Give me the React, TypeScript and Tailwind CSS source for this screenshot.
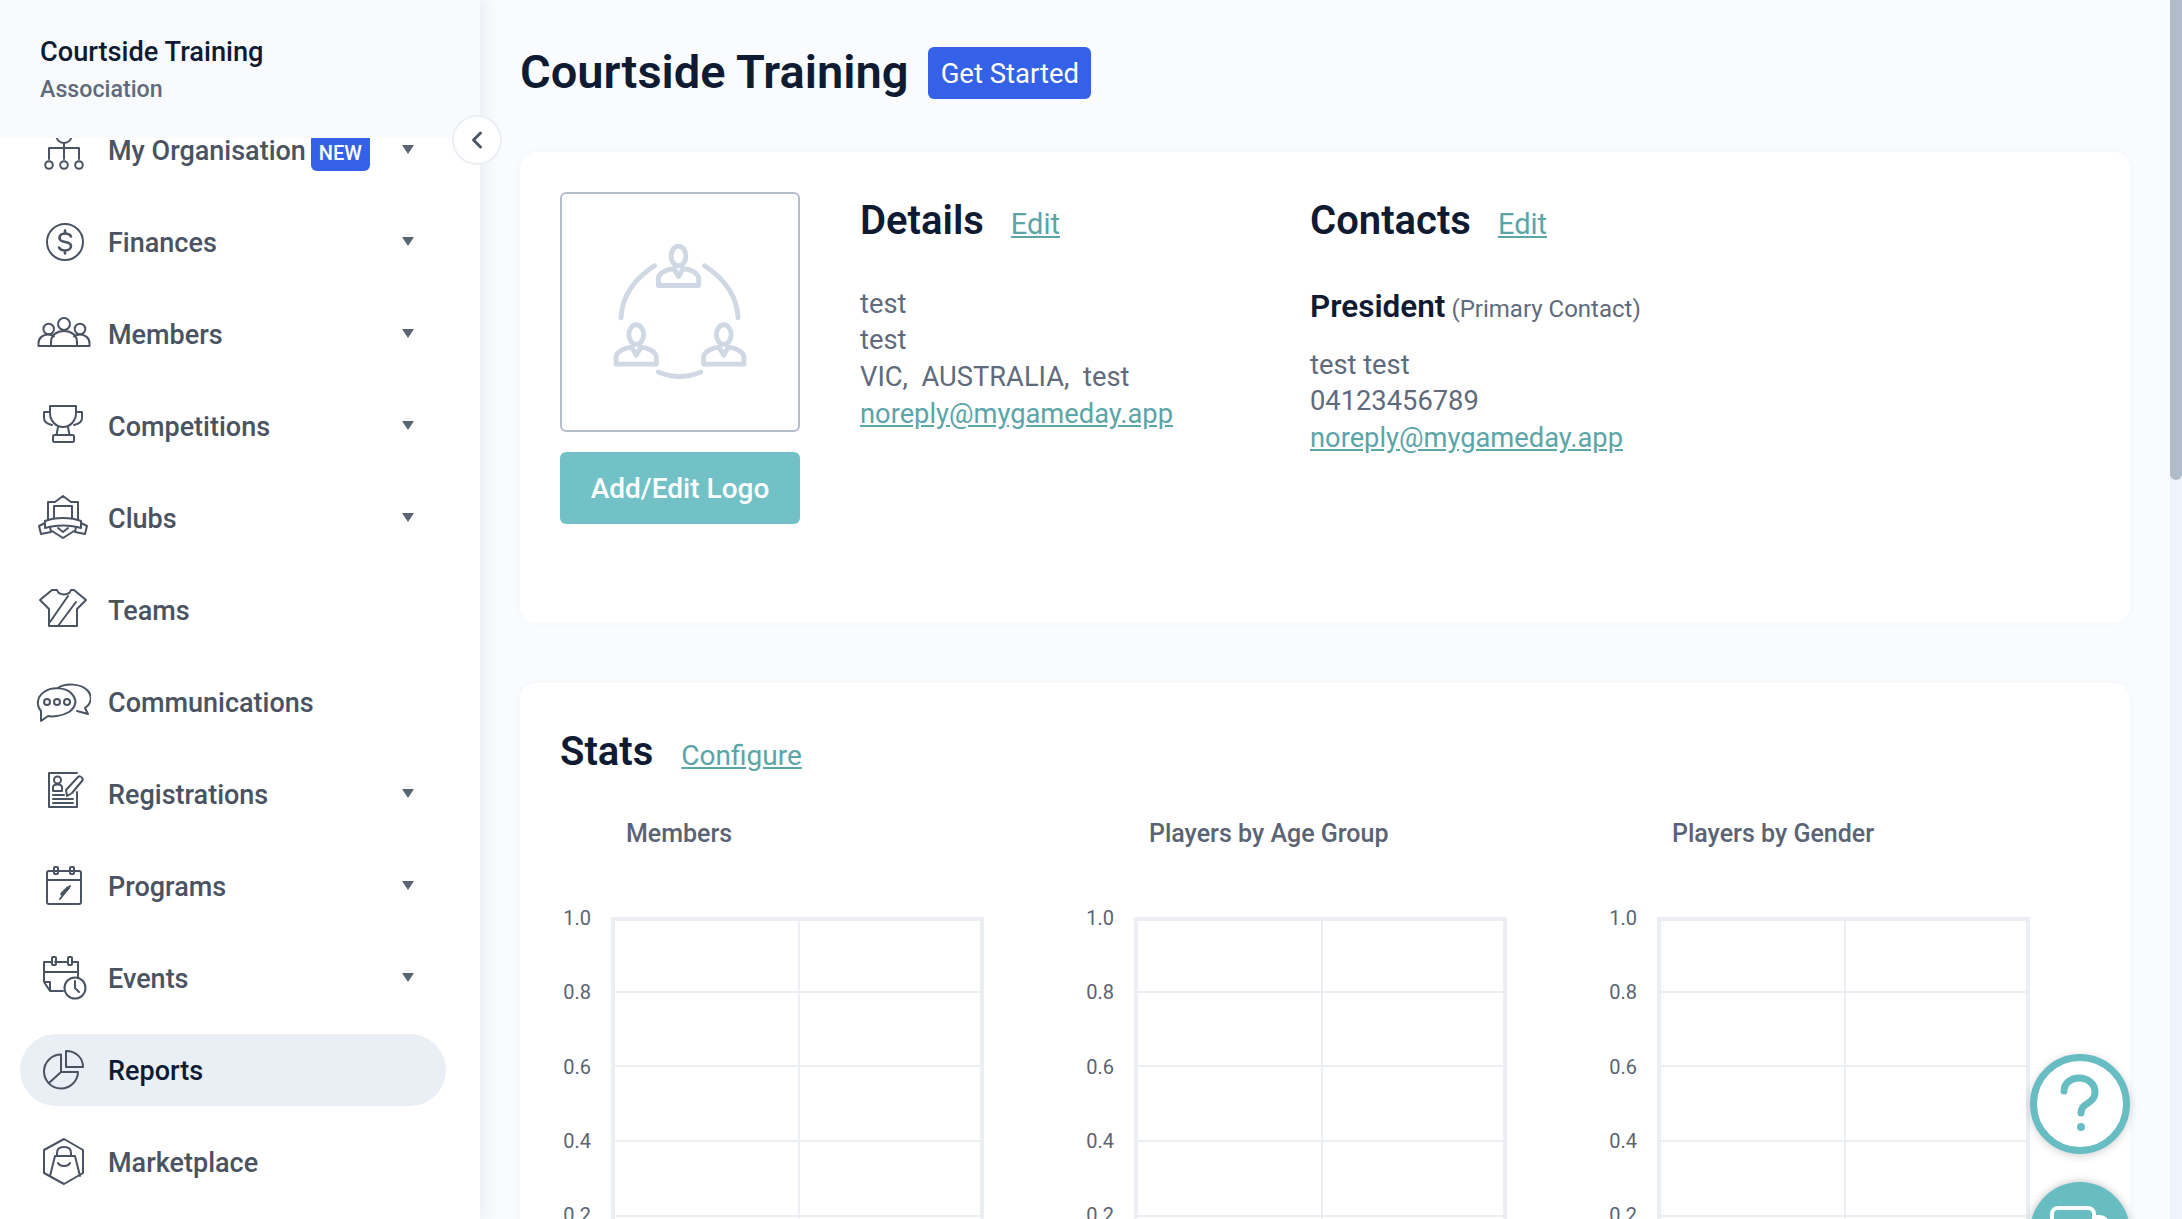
import type { ReactNode } from 'react';
import { ChevronLeft } from 'lucide-react';

const IconSvg = ({ children }: { children: ReactNode }) => (
  <svg width="56" height="56" viewBox="0 0 56 56" fill="none" stroke="#4a5362" strokeWidth="2" strokeLinejoin="round" strokeLinecap="round" className="shrink-0">
    {children}
  </svg>
);

const OrgIcon = () => (
  <IconSvg>
    <circle cx="29" cy="13" r="8" />
    <path d="M14 37V26H44V37M29 21V37" />
    <circle cx="14" cy="43" r="3.8" />
    <circle cx="29" cy="43" r="3.8" />
    <circle cx="44" cy="43" r="3.8" />
  </IconSvg>
);

const FinanceIcon = () => (
  <IconSvg>
    <circle cx="30" cy="28" r="18" />
    <path d="M36 22.5C35 20.5 33 19.5 30 19.5C26.5 19.5 24.5 21.5 24.5 24C24.5 30 36 26 36 32C36 34.8 33.5 36.5 30 36.5C27 36.5 25 35.5 24 33.5M30 16.5V19.5M30 36.5V39.5" strokeWidth="2.6" />
  </IconSvg>
);

const MembersIcon = () => (
  <IconSvg>
    <circle cx="13.7" cy="23" r="5.3" />
    <circle cx="29" cy="18" r="6" />
    <circle cx="45" cy="23" r="5.3" />
    <path d="M3.5 40H54.5M3.5 40V37C3.5 32 8 28.5 13 28.5C15.5 28.5 17.5 29.3 19 30.5M54.5 40V37C54.5 32 50 28.5 45 28.5C42.5 28.5 40.5 29.3 39 30.5M16 40V36C16 29 22 25 29 25C36 25 42 29 42 36V40" />
  </IconSvg>
);

const TrophyIcon = () => (
  <IconSvg>
    <path d="M15 8H41V15C41 23 35 29 28 29C21 29 15 23 15 15Z" />
    <path d="M15 14H9V20C9 24 12 26 17 27M41 14H47V20C47 24 44 26 39 27M23 29L21.5 37M33 29L34.5 37" />
    <rect x="18" y="37" width="21" height="7" rx="1.5" />
  </IconSvg>
);

const ClubIcon = () => (
  <IconSvg>
    <path d="M13 30V12H20L28 6L36 12H43V30" />
    <path d="M19 28V16H37V28" />
    <path d="M10 31C20 27 36 27 46 31L46 38C36 34.5 20 34.5 10 38Z" />
    <path d="M10 33L4 36L6 44L16 42L15 37M46 33L52 36L50 44L40 42L41 37" />
    <path d="M17 41L28 48L39 41M23 38L28 42L33 38" />
  </IconSvg>
);

const ShirtIcon = () => (
  <IconSvg>
    <path d="M17 8L5 18L14 27V44H42V27L51 18L39 8H36C34 14 24 14 22 8Z" />
    <path d="M33 14L15 40M41 20L23 44" />
  </IconSvg>
);

const ChatIcon = () => (
  <IconSvg>
    <path d="M6 37C1 31 2 23 9 18C16 13 30 13 36 19C43 26 41 33 34 38C27 42 18 43 13 42L6 47Z" />
    <circle cx="12" cy="28" r="3" />
    <circle cx="22" cy="28" r="3" />
    <circle cx="32" cy="28" r="3" />
    <path d="M23 14C30 9 46 9 53 17C58 23 56 30 50 34L53 40L42 37" />
  </IconSvg>
);

const RegoIcon = () => (
  <IconSvg>
    <path d="M42 7H14V41H42V26" />
    <circle cx="22.5" cy="14" r="3.5" />
    <path d="M18 25V21.5C18 19.5 20 18.5 22.5 18.5C25 18.5 27 19.5 27 21.5V25Z" />
    <path d="M32 30L31 24L43 11C44 10 46 10 47 12C48 13 48 14 47 15L37 27Z" />
    <path d="M18 29H29M18 33H38M18 37H38" />
  </IconSvg>
);

const ProgramIcon = () => (
  <IconSvg>
    <rect x="12" y="13" width="34" height="33" rx="2" />
    <rect x="19" y="9" width="4" height="7" rx="1" />
    <rect x="35" y="9" width="4" height="7" rx="1" />
    <path d="M12 22H46M25 41L35 28" />
    <path d="M27 36L33 30" strokeWidth="3.5" />
  </IconSvg>
);

const EventIcon = () => (
  <IconSvg>
    <path d="M17 12H9V32L15 41H28M9 32H15V41M20 12H32M37 12H43V27M9 22H43" />
    <rect x="17" y="7" width="4" height="8" rx="1" />
    <rect x="33" y="7" width="4" height="8" rx="1" />
    <circle cx="40" cy="38" r="10.5" />
    <path d="M40 31V38L44 42" />
  </IconSvg>
);

const PieIcon = () => (
  <IconSvg>
    <path d="M31 9V25H48C48 16 41 9 31 9Z" />
    <path d="M26 12.5A17 17 0 1 0 43 30H26ZM26 30L14 41" />
  </IconSvg>
);

const MarketIcon = () => (
  <IconSvg>
    <path d="M29 5L48 16V39L29 50L9 39V16Z" />
    <path d="M15 42L20 22H40L45 42" />
    <path d="M22 22V19C22 15 25 13 29 13C33 13 36 15 36 19V22M23 29C25 33 33 33 35 29" />
  </IconSvg>
);

const navItems = [
  { label: 'My Organisation', icon: <OrgIcon />, caret: true, badge: true },
  { label: 'Finances', icon: <FinanceIcon />, caret: true },
  { label: 'Members', icon: <MembersIcon />, caret: true },
  { label: 'Competitions', icon: <TrophyIcon />, caret: true },
  { label: 'Clubs', icon: <ClubIcon />, caret: true },
  { label: 'Teams', icon: <ShirtIcon /> },
  { label: 'Communications', icon: <ChatIcon /> },
  { label: 'Registrations', icon: <RegoIcon />, caret: true },
  { label: 'Programs', icon: <ProgramIcon />, caret: true },
  { label: 'Events', icon: <EventIcon />, caret: true },
  { label: 'Reports', icon: <PieIcon />, active: true },
  { label: 'Marketplace', icon: <MarketIcon /> },
];

const Caret = () => (
  <svg width="12" height="9" viewBox="0 0 12 9" className="ml-auto mb-[1px] shrink-0">
    <path d="M0 0H12L6 9Z" fill="#5a6474" />
  </svg>
);

const Person = ({ x, y }: { x: number; y: number }) => (
  <g transform={`translate(${x} ${y})`}>
    <ellipse cx="20.5" cy="-13" rx="7.5" ry="10" />
    <path d="M0 17V10C0 4 10 0 16 0L20.5 8L25 0C31 0 41 4 41 10V17Z" />
  </g>
);

const LogoPlaceholder = () => (
  <svg width="238" height="238" viewBox="0 0 240 240" fill="none" stroke="#cfd8e3" strokeWidth="5" strokeLinecap="round" strokeLinejoin="round">
    <Person x={98} y={76} />
    <Person x={55} y={156} />
    <Person x={144} y={156} />
    <path d="M94 73C74 86 61 104 60 126M145 73C165 86 178 104 179 126M98 181C112 187 127 187 141 181" />
  </svg>
);

const Chart = ({ title }: { title: string }) => (
  <div className="w-[523px] shrink-0">
    <div className="ml-[66px] text-[25px] leading-[36px] font-medium text-[#5a6474]">{title}</div>
    <div className="mt-[65px] flex gap-[20px]">
      <div className="-mt-[11px] w-[31px] text-right text-[20px] leading-[24px] text-[#5a6474]">
        {['1.0', '0.8', '0.6', '0.4', '0.2'].map((tick) => (
          <div key={tick} className="h-[74.3px]">{tick}</div>
        ))}
      </div>
      <svg width="373" height="373" viewBox="0 0 373 373" fill="none" stroke="#ebeff4" strokeWidth="2" className="shrink-0">
        <rect x="2" y="2" width="369" height="369" strokeWidth="4" />
        <path d="M188 0V373M0 75H373M0 149H373M0 224H373M0 299H373" />
      </svg>
    </div>
  </div>
);

export default function App() {
  return (
    <div className="relative flex h-screen w-full overflow-hidden bg-[#f9fbfe] font-['Roboto',sans-serif] text-[#4a5362]">
      {/* Sidebar */}
      <aside className="relative z-10 flex w-[480px] shrink-0 flex-col bg-white shadow-[5px_0_14px_rgba(110,125,150,0.10)]">
        <div className="relative z-10 h-[138px] shrink-0 bg-[#f8fafd] pl-[40px] pt-[34px]">
          <div className="text-[27.2px] leading-[36px] font-medium text-[#0f1a33]">Courtside Training</div>
          <div className="mt-[1px] text-[23.2px] leading-[36px] font-medium text-[#5f6b7c]">Association</div>
        </div>
        <nav className="-mt-[24px] flex flex-col gap-[20px] pl-[20px] pr-[34px]">
          {navItems.map((item) => (
            <div key={item.label} className={`flex h-[72px] items-center rounded-[36px] pl-[15px] pr-[32px] ${item.active ? 'bg-[#e9eff4]' : ''}`}>
              {item.icon}
              <span className={`ml-[17px] pt-[2px] text-[27px] leading-[36px] font-medium ${item.active ? 'text-[#0f1a33]' : ''}`}>{item.label}</span>
              {item.badge && (
                <span className="ml-[5px] mt-[6px] flex h-[36px] w-[59px] items-center justify-center rounded-b-[6px] bg-[#3561e8] text-[20px] font-medium text-white">NEW</span>
              )}
              {item.caret && <Caret />}
            </div>
          ))}
        </nav>
        <button className="absolute left-[452px] top-[115px] z-20 flex h-[50px] w-[50px] items-center justify-center rounded-full border-2 border-[#eceff3] bg-white">
          <ChevronLeft size={28} strokeWidth={2.5} color="#4a5362" />
        </button>
      </aside>

      {/* Main */}
      <main className="min-w-0 flex-1 px-[40px] pt-[46px]">
        <div className="flex items-center gap-[20px]">
          <h1 className="pb-[2px] text-[47px] leading-[52px] font-semibold text-[#0f1a33]">Courtside Training</h1>
          <button className="flex h-[52px] w-[163px] items-center justify-center rounded-[6px] bg-[#3561e8] pt-[2px] text-[27.5px] text-white">Get Started</button>
        </div>

        <section className="mt-[52px] flex h-[471px] rounded-[16px] bg-white p-[40px] shadow-[0_0_6px_rgba(130,150,180,0.05)]">
          <div className="w-[240px] shrink-0">
            <div className="flex h-[240px] items-center justify-center rounded-[6px] border-2 border-[#b4bdc9]">
              <LogoPlaceholder />
            </div>
            <button className="mt-[20px] h-[72px] w-full rounded-[6px] bg-[#72c1c6] pt-[1px] text-[28px] font-medium text-white">Add/Edit Logo</button>
          </div>

          <div className="ml-[60px] w-[450px] shrink-0 pt-[0.5px]">
            <div className="flex items-baseline gap-[27px]">
              <h2 className="text-[40px] leading-[56px] font-semibold text-[#0f1a33]">Details</h2>
              <a className="text-[29px] text-[#5ba5a8] underline">Edit</a>
            </div>
            <div className="mt-[37px] text-[27.3px] leading-[36.7px] text-[#5f6b7c]">
              <div>test</div>
              <div>test</div>
              <div>VIC,&nbsp; AUSTRALIA,&nbsp; test</div>
              <a className="text-[#5ba5a8] underline">noreply@mygameday.app</a>
            </div>
          </div>

          <div className="pt-[0.5px]">
            <div className="flex items-baseline gap-[27px]">
              <h2 className="text-[40px] leading-[56px] font-semibold text-[#0f1a33]">Contacts</h2>
              <a className="text-[29px] text-[#5ba5a8] underline">Edit</a>
            </div>
            <div className="mt-[38px] leading-[40px]">
              <span className="text-[31.5px] font-semibold text-[#0f1a33]">President</span>
              <span className="ml-[6px] text-[24px] text-[#5f6b7c]">(Primary Contact)</span>
            </div>
            <div className="mt-[15px] text-[27.3px] leading-[36.7px] text-[#5f6b7c]">
              <div>test test</div>
              <div>04123456789</div>
              <a className="text-[#5ba5a8] underline">noreply@mygameday.app</a>
            </div>
          </div>
        </section>

        <section className="mt-[60px] h-[700px] rounded-[16px] bg-white px-[40px] pt-[41px] shadow-[0_0_6px_rgba(130,150,180,0.05)]">
          <div className="flex items-baseline gap-[28px]">
            <h2 className="text-[40px] leading-[56px] font-semibold text-[#0f1a33]">Stats</h2>
            <a className="text-[28px] text-[#5ba5a8] underline">Configure</a>
          </div>
          <div className="mt-[36px] flex">
            <Chart title="Members" />
            <Chart title="Players by Age Group" />
            <Chart title="Players by Gender" />
          </div>
        </section>
      </main>

      {/* Scrollbar */}
      <div className="w-[12px] shrink-0 bg-[#eef3fc]">
        <div className="h-[480px] rounded-b-[6px] bg-[#b0bcc9]" />
      </div>

      {/* Help and chat */}
      <button className="absolute left-[2030px] top-[1054px] z-20 flex h-[100px] w-[100px] items-center justify-center rounded-full border-[7px] border-[#68bdc3] bg-white shadow-[0_2px_8px_rgba(0,0,0,0.18)]">
        <svg width="44" height="62" viewBox="0 0 44 62" fill="none" stroke="#68bdc3" strokeWidth="7" strokeLinecap="round">
          <path d="M6 18C6 10 13 5 21 5C30 5 37 11 37 19C37 27 31 29 26 33C23.5 35 23 37 23 40" />
          <circle cx="23" cy="54" r="4" fill="#68bdc3" stroke="none" />
        </svg>
      </button>
      <div className="absolute left-[2030px] top-[1182px] z-20 h-[100px] w-[100px] rounded-full bg-[#68bdc3] shadow-[0_0_8px_rgba(0,0,0,0.25)]">
        <svg width="60" height="50" viewBox="0 0 60 50" fill="none" stroke="#fff" strokeWidth="4" className="ml-[20px] mt-[24px]">
          <rect x="2" y="2" width="42" height="30" rx="6" />
          <path d="M44 11H50C54 11 57 14 57 18V34" />
        </svg>
      </div>
    </div>
  );
}
